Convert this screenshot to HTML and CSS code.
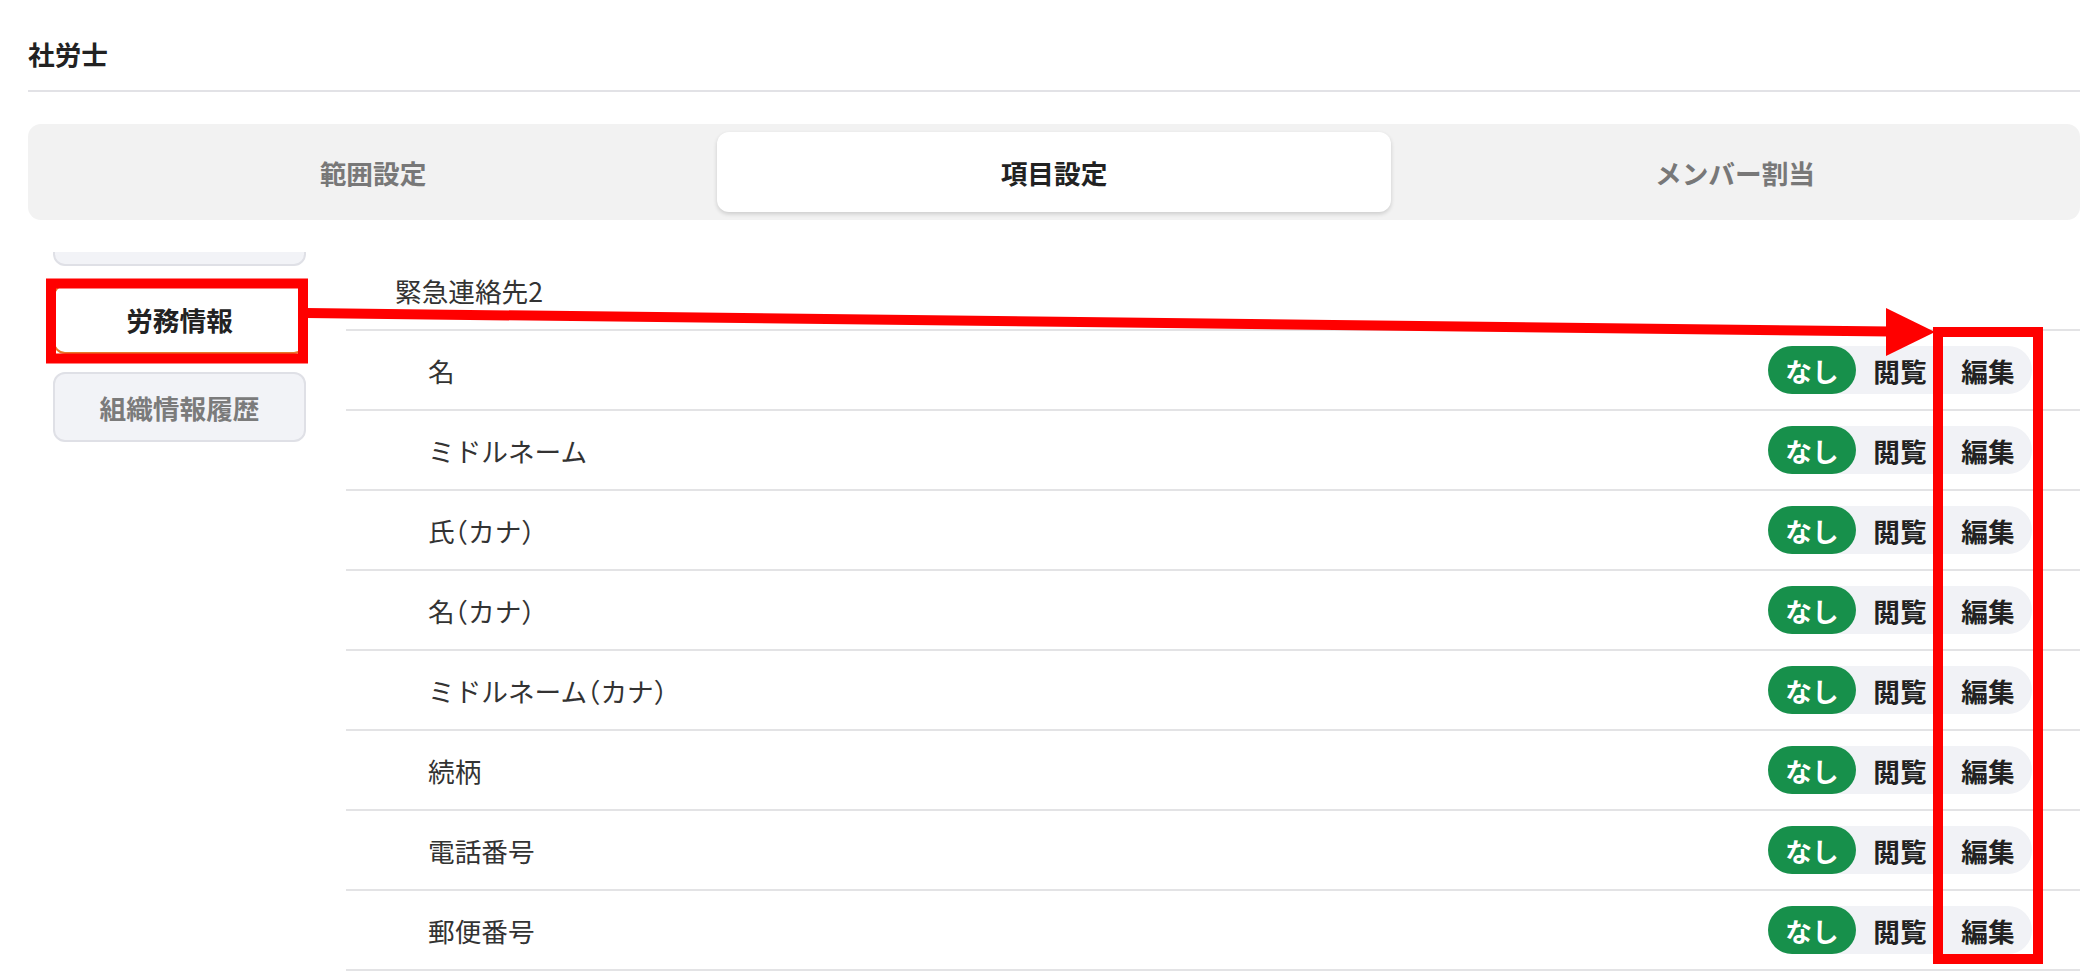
FILE: index.html
```html
<!DOCTYPE html>
<html lang="ja">
<head>
<meta charset="utf-8">
<title>社労士 - 項目設定</title>
<link rel="stylesheet" href="styles.css">
</head>
<body>
<div class="page">
  <h1 class="title">社労士</h1>

  <div class="tabs">
    <div class="tab">範囲設定</div>
    <div class="tab active">項目設定</div>
    <div class="tab">メンバー割当</div>
  </div>

  <div class="main">
    <nav class="side">
      <div class="side-scroll">
        <div class="side-btn partial"></div>
        <div class="side-btn active">労務情報</div>
        <div class="side-btn">組織情報履歴</div>
      </div>
    </nav>

    <section class="content">
      <div class="group-head">緊急連絡先2</div>

      <div class="row">
        <span class="label">名</span>
        <div class="seg"><span class="opt on">なし</span><span class="opt">閲覧</span><span class="opt">編集</span></div>
      </div>
      <div class="row">
        <span class="label">ミドルネーム</span>
        <div class="seg"><span class="opt on">なし</span><span class="opt">閲覧</span><span class="opt">編集</span></div>
      </div>
      <div class="row">
        <span class="label">氏<span class="paren">（</span>カナ<span class="paren">）</span></span>
        <div class="seg"><span class="opt on">なし</span><span class="opt">閲覧</span><span class="opt">編集</span></div>
      </div>
      <div class="row">
        <span class="label">名<span class="paren">（</span>カナ<span class="paren">）</span></span>
        <div class="seg"><span class="opt on">なし</span><span class="opt">閲覧</span><span class="opt">編集</span></div>
      </div>
      <div class="row">
        <span class="label">ミドルネーム<span class="paren">（</span>カナ<span class="paren">）</span></span>
        <div class="seg"><span class="opt on">なし</span><span class="opt">閲覧</span><span class="opt">編集</span></div>
      </div>
      <div class="row">
        <span class="label">続柄</span>
        <div class="seg"><span class="opt on">なし</span><span class="opt">閲覧</span><span class="opt">編集</span></div>
      </div>
      <div class="row">
        <span class="label">電話番号</span>
        <div class="seg"><span class="opt on">なし</span><span class="opt">閲覧</span><span class="opt">編集</span></div>
      </div>
      <div class="row">
        <span class="label">郵便番号</span>
        <div class="seg"><span class="opt on">なし</span><span class="opt">閲覧</span><span class="opt">編集</span></div>
      </div>
    </section>
  </div>

  <svg class="annot" width="2090" height="976" viewBox="0 0 2090 976" aria-hidden="true">
    <rect x="51" y="283.5" width="252" height="75" fill="none" stroke="#ff0000" stroke-width="10"/>
    <line x1="306" y1="313" x2="1890" y2="331.5" stroke="#ff0000" stroke-width="10"/>
    <polygon points="1886,308 1886,356 1935,332" fill="#ff0000"/>
    <rect x="1938" y="332" width="100" height="627" fill="none" stroke="#ff0000" stroke-width="10"/>
  </svg>
</div>
</body>
</html>
```

FILE: styles.css
```css
* {
  box-sizing: border-box;
}

html,
body {
  margin: 0;
  height: 976px;
  overflow: hidden;
  background: #ffffff;
}

body {
  font-family: "Noto Sans CJK JP", "Noto Sans", sans-serif;
  color: #333333;
  font-size: 26.67px;
}

.page {
  position: relative;
  height: 976px;
  padding: 0 10px 0 28px;
  display: flex;
  flex-direction: column;
}

.title {
  margin: 0;
  padding: 34px 0 16px;
  font-size: 26.67px;
  line-height: 40px;
  font-weight: 700;
  color: #222222;
  border-bottom: 2px solid #e2e2e6;
}

.tabs {
  margin-top: 32px;
  height: 96px;
  padding: 8px;
  background: #f2f2f2;
  border-radius: 13px;
  display: grid;
  grid-template-columns: repeat(3, 1fr);
  column-gap: 7px;
}

.tab {
  display: flex;
  align-items: center;
  justify-content: center;
  font-weight: 700;
  font-size: 26.67px;
  color: #787878;
  border-radius: 12px;
}

.tab.active {
  background: #ffffff;
  color: #222222;
  box-shadow: 0 2px 4px rgba(0, 0, 0, 0.16);
}

.main {
  margin-top: 32px;
  flex: 1;
  min-height: 0;
  display: grid;
  grid-template-columns: 318px 1fr;
}

.side {
  padding: 0 40px 0 25px;
  overflow: hidden;
}

.side-scroll {
  display: flex;
  flex-direction: column;
  gap: 18px;
}

.side-btn {
  height: 70px;
  flex: none;
  display: flex;
  align-items: center;
  justify-content: center;
  background: #f2f3f7;
  border: 2px solid #dfe0e6;
  border-radius: 12px;
  font-weight: 700;
  font-size: 26.67px;
  color: #7b7b7b;
}

.side-btn.partial {
  margin-top: -56px;
}

.side-btn.active {
  background: #ffffff;
  color: #222222;
  border-color: #e8782a;
}

.content {
  display: flex;
  flex-direction: column;
  overflow: hidden;
}

.group-head {
  flex: none;
  height: 79px;
  padding-left: 49px;
  display: flex;
  align-items: center;
  border-bottom: 2px solid #e3e3e5;
  color: #333333;
}

.row {
  flex: none;
  height: 80px;
  padding: 0 48px 0 82px;
  display: flex;
  align-items: center;
  justify-content: space-between;
  border-bottom: 2px solid #e3e3e5;
}

.label {
  color: #333333;
}

.paren {
  font-feature-settings: "halt";
}

.seg {
  display: flex;
  height: 48px;
  background: #f1f2f6;
  border-radius: 24px;
}

.opt {
  width: 88px;
  display: flex;
  align-items: center;
  justify-content: center;
  font-weight: 700;
  color: #222222;
  border-radius: 24px;
}

.opt.on {
  background: #17904b;
  color: #ffffff;
}

.annot {
  position: absolute;
  left: 0;
  top: 0;
  pointer-events: none;
}
```
